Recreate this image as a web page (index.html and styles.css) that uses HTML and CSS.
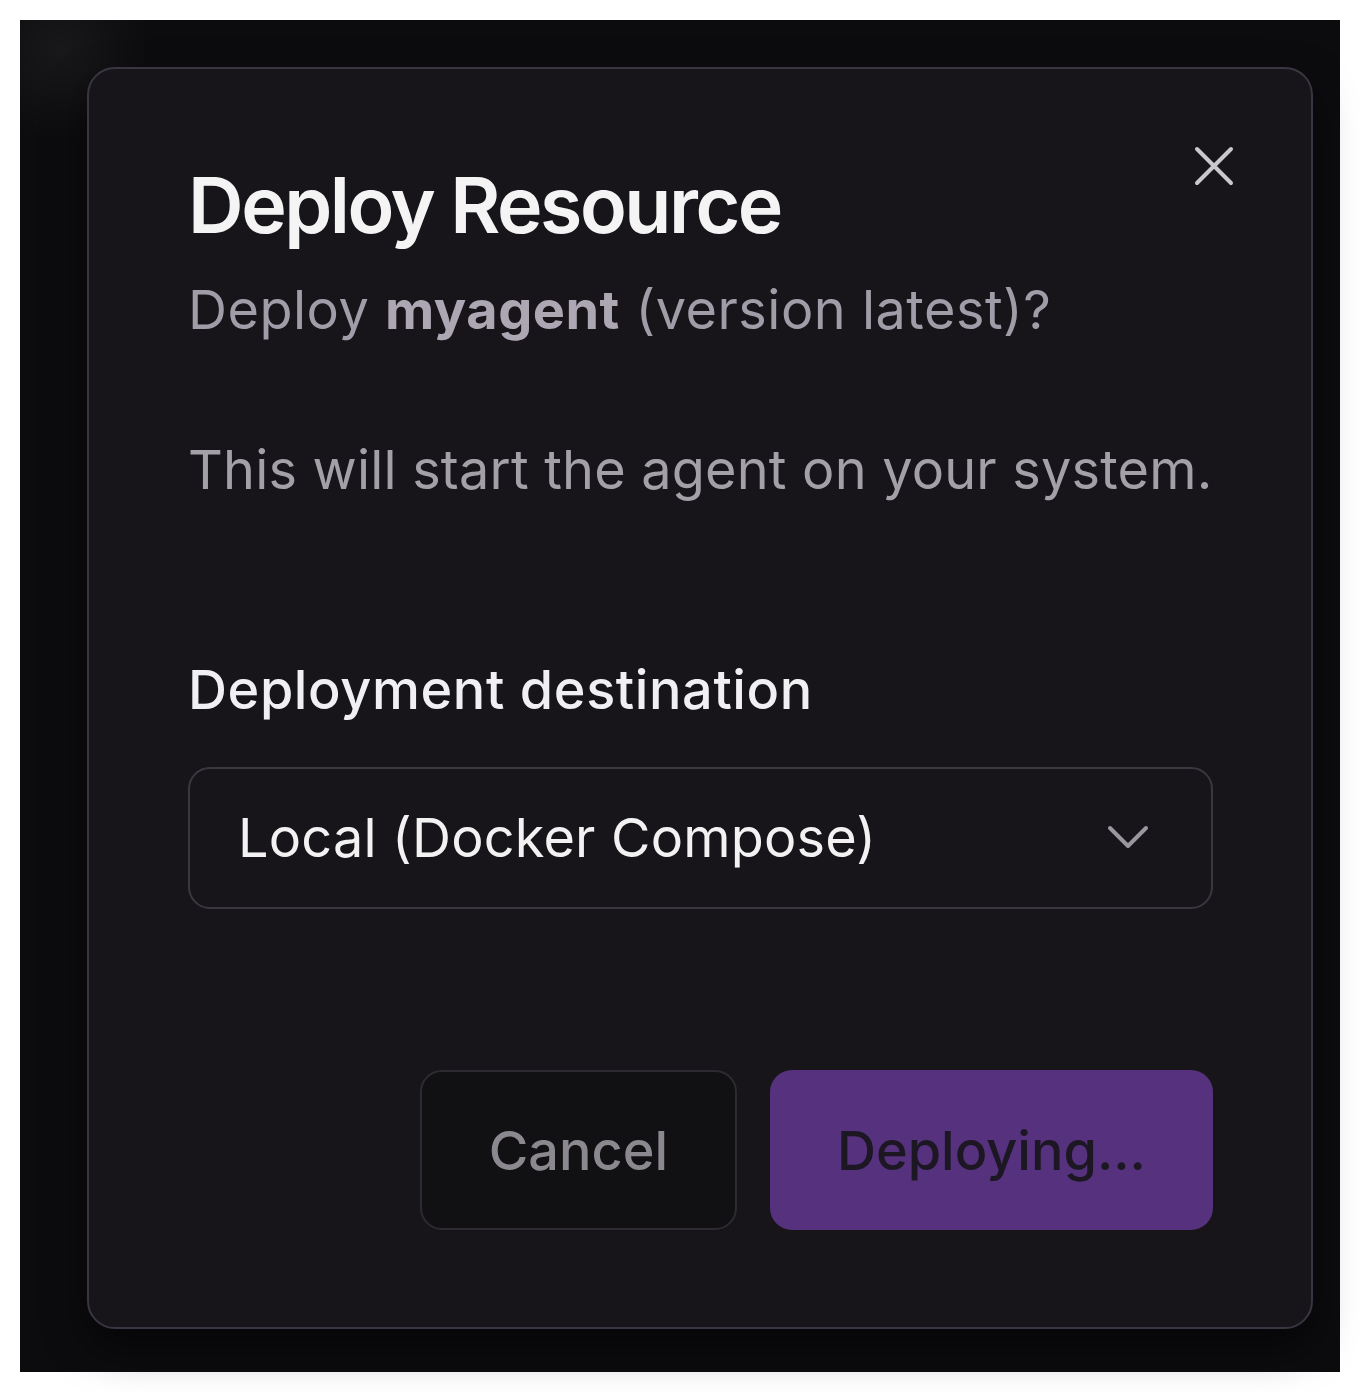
FILE: index.html
```html
<!DOCTYPE html>
<html lang="en">
  <head>
    <meta charset="UTF-8" />
    <meta name="viewport" content="width=device-width, initial-scale=1.0" />
    <title>Deploy Resource</title>
    <link rel="stylesheet" href="styles.css">
  </head>
  <body>
    <div class="backdrop">
      <div class="dialog" role="dialog" aria-labelledby="dialogTitle">
        <button class="close-button" aria-label="Close">
          <svg width="40" height="40" viewBox="0 0 40 40" fill="none">
            <path d="M3 3 L37 37 M37 3 L3 37" stroke="currentColor" stroke-width="4" stroke-linecap="round" />
          </svg>
        </button>

        <h1 id="dialogTitle">Deploy Resource</h1>
        <p class="subtitle">Deploy <strong>myagent</strong> (version latest)?</p>
        <p class="note">This will start the agent on your system.</p>

        <!-- Destination picker -->
        <label class="field-label" for="destination">Deployment destination</label>
        <div class="select" id="destination">
          <span>Local (Docker Compose)</span>
          <svg width="42" height="28" viewBox="0 0 42 28" fill="none">
            <path d="M3 4 L21 22 L39 4" stroke="currentColor" stroke-width="4" stroke-linecap="round" stroke-linejoin="round" />
          </svg>
        </div>

        <div class="actions">
          <button class="btn btn-cancel">Cancel</button>
          <button class="btn btn-primary" disabled>Deploying...</button>
        </div>
      </div>
    </div>
  </body>
</html>
```

FILE: styles.css
```css
body {
  margin: 0;
  padding: 20px;
  background-color: white;
  font-family: Inter, 'Noto Sans', sans-serif;
}
.backdrop {
  height: 1352px;
  box-sizing: border-box;
  padding: 47px 27px 0 67px;
  background-color: #0c0b0e;
  background-image: radial-gradient(circle at 40px 30px, rgba(255, 255, 255, 0.05), transparent 90px);
}
.dialog {
  position: relative;
  width: 1226px;
  height: 1262px;
  box-sizing: border-box;
  padding: 89px 98px 0 99px;
  background-color: #17151a;
  border: 2px solid #3a3641;
  border-radius: 28px;
  box-shadow: 0 20px 40px rgba(0, 0, 0, 0.5);
  display: flex;
  flex-direction: column;
}
.close-button {
  position: absolute;
  top: 77px;
  right: 77px;
  padding: 0;
  width: 40px;
  height: 40px;
  background: none;
  border: none;
  color: #c9c9cb;
  cursor: pointer;
}
.close-button svg {
  display: block;
}
h1 {
  margin: 0;
  font-size: 77px;
  line-height: 94px;
  font-weight: 600;
  letter-spacing: -0.032em;
  color: #f4f4f5;
}
.subtitle {
  margin: 18px 0 0;
  font-size: 54px;
  line-height: 80px;
  letter-spacing: 0.5px;
  color: #a19da8;
}
.subtitle strong {
  font-weight: 700;
  color: #aca7b2;
}
.note {
  margin: 80px 0 0;
  font-size: 54px;
  line-height: 80px;
  letter-spacing: 0.2px;
  color: #a3a0a8;
}
.field-label {
  margin-top: 140px;
  font-size: 54px;
  line-height: 80px;
  font-weight: 500;
  letter-spacing: 0.6px;
  color: #f0f0f2;
}
.select {
  margin-top: 37px;
  height: 142px;
  box-sizing: border-box;
  padding: 0 62px 0 48px;
  display: flex;
  align-items: center;
  justify-content: space-between;
  border: 2px solid #3a383f;
  border-radius: 22px;
  font-size: 54px;
  line-height: 80px;
  letter-spacing: 0.2px;
  color: #f2f2f3;
}
.select svg {
  color: #9a989e;
  display: block;
}
.actions {
  margin-top: 161px;
  display: flex;
  justify-content: flex-end;
  gap: 33px;
}
.btn {
  height: 160px;
  box-sizing: border-box;
  padding: 0 67px;
  border-radius: 22px;
  font-family: inherit;
  font-size: 54px;
  font-weight: 500;
  cursor: pointer;
}
.btn-cancel {
  background-color: #111013;
  border: 2px solid #2d2b31;
  color: #8b898f;
}
.btn-primary {
  background-color: #56317e;
  border: none;
  color: #1c1722;
}
```
